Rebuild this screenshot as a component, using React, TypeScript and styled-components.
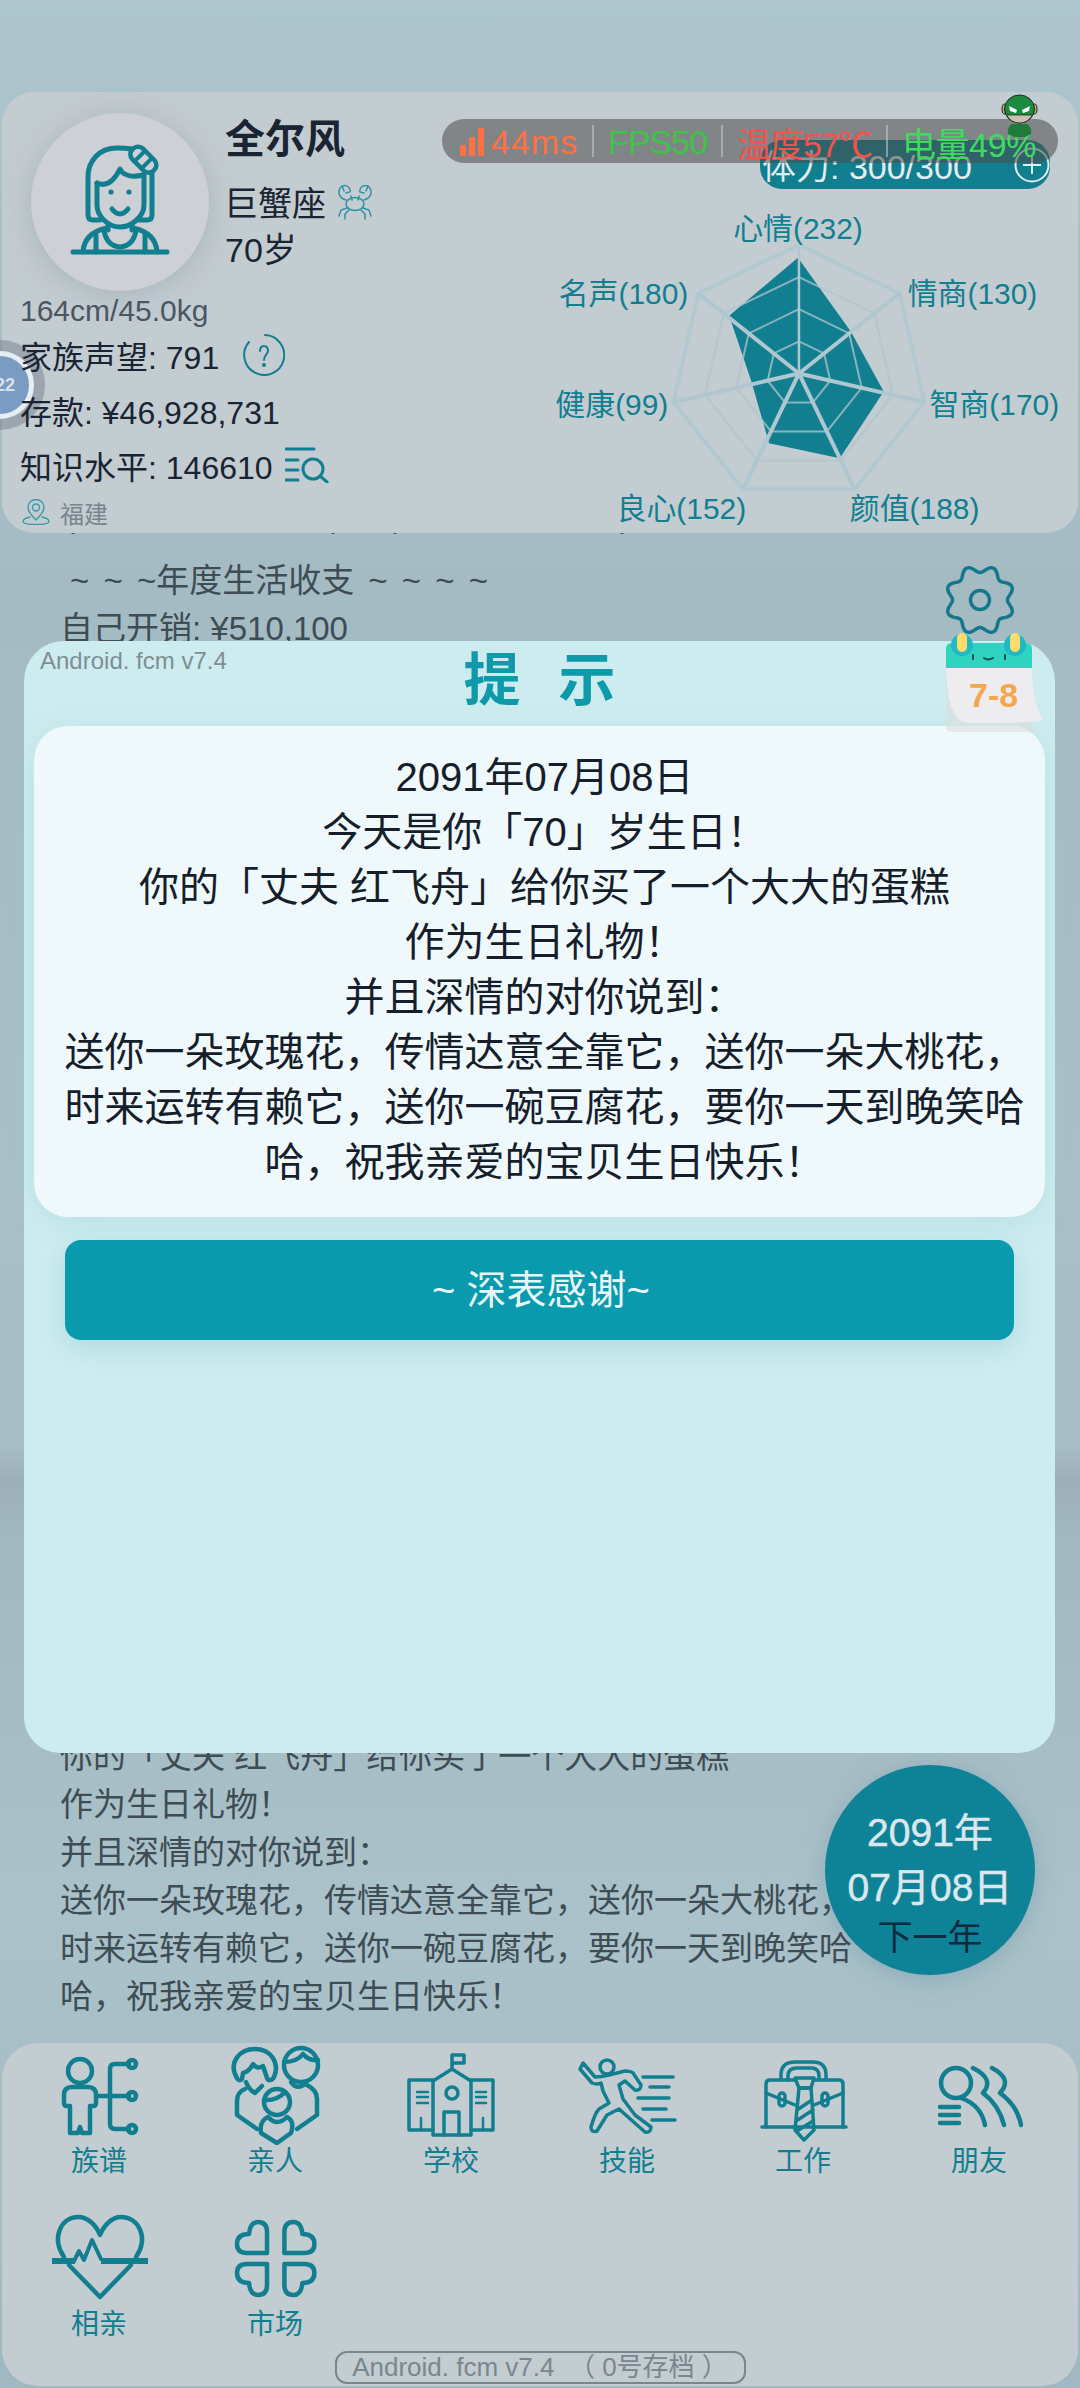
import * as React from 'react'
import styled, { createGlobalStyle } from 'styled-components'

const TEAL = '#117f90'
const FONT = `"Liberation Sans", "Noto Sans CJK SC", sans-serif`

const Global = createGlobalStyle`
  html, body {
    margin: 0;
    padding: 0;
    background: #a6bec7;
  }
  * {
    box-sizing: border-box;
  }
`

const Page = styled.div`
  position: relative;
  width: 1080px;
  height: 2388px;
  overflow: hidden;
  padding: 92px 2px 2px;
  display: flex;
  flex-direction: column;
  font-family: ${FONT};
  color: #1a2433;
  background: linear-gradient(180deg, #adc5cc 0%, #a4bbc3 25%, #a9c0c8 50%, #a8bdc4 60.500%, #9eb0b7 62%, #a2b8c0 64.500%, #abc2ca 80%, #a0b8c2 100%);
`

const TopCard = styled.section`
  position: relative;
  z-index: 2;
  flex: none;
  height: 441px;
  background: #c3ccd1;
  border-radius: 32px;
  display: flex;
  justify-content: space-between;
  padding: 21px 0 0 18px;
`

const Profile = styled.div`
  position: relative;
  z-index: 1;
  display: flex;
  flex-direction: column;
  width: 440px;
`

const ProfileHead = styled.div`
  display: flex;
  gap: 16px;
  margin-left: 11px;
`

const Avatar = styled.div`
  width: 178px;
  height: 178px;
  border-radius: 50%;
  background: #cdd0d4;
  box-shadow: 0 4px 30px rgba(120, 135, 150, 0.35);
  flex: none;
`

const HeadText = styled.div`
  display: flex;
  flex-direction: column;
  padding-top: 1px;
`

const Name = styled.div`
  font-size: 40px;
  line-height: 50px;
  font-weight: 700;
`

const Sign = styled.div`
  display: flex;
  align-items: center;
  gap: 10px;
  font-size: 34px;
  line-height: 46px;
  margin-top: 17px;
  margin-left: -1px;
  svg {
    margin-top: -4px;
  }
`

const Age = styled.div`
  font-size: 34px;
  line-height: 46px;
`

const Body = styled.div`
  display: flex;
  align-items: center;
  font-size: 30px;
  line-height: 36px;
  color: #4b5563;
  margin: 2px 0 -2px;
`

const Stat = styled.div`
  display: flex;
  align-items: center;
  font-size: 32px;
  height: 55px;
  white-space: nowrap;
`

const Place = styled.div`
  display: flex;
  align-items: center;
  gap: 10px;
  height: 30px;
  margin-top: 5px;
  margin-left: 2px;
  font-size: 24px;
  color: #7a848d;
`

const ChartSide = styled.div`
  display: flex;
  flex-direction: column;
  align-items: flex-end;
  padding: 27px 28px 0 0;
`

const Stamina = styled.div`
  width: 290px;
  height: 49px;
  border-radius: 22px;
  background: ${TEAL};
  color: #e3edf0;
  font-size: 34px;
  display: flex;
  align-items: center;
  justify-content: space-between;
  padding: 0 0 0 2px;
  margin-bottom: 10px;
`

const RadarBox = styled.svg`
  display: block;
  margin-right: -28px;
`

const RadarLabel = styled.text`
  font-family: ${FONT};
  font-size: 30px;
  fill: ${TEAL};
`

const Log = styled.div`
  position: relative;
  z-index: 1;
  flex: none;
  margin-top: -41px;
  padding-left: 58px;
  width: 880px;
  font-size: 33px;
  line-height: 48px;
  color: #3e4c54;
  white-space: nowrap;
`

const LogLine = styled.div`
  height: 48px;
`

const ParenLine = styled(LogLine)`
  display: flex;
  margin-bottom: 17px;
  padding-left: 4px;
`

const Paren = styled.span<{ $gap: number }>`
  margin-left: ${(p) => p.$gap}px;
`

const LogIndent = styled(LogLine)`
  padding-left: 10px;
  word-spacing: 5px;
`

const LogGap = styled.div`
  height: 1080px;
`

const Nav = styled.nav`
  position: relative;
  z-index: 2;
  margin-top: auto;
  flex: none;
  height: 343px;
  background: #c3ccd1;
  border-radius: 36px;
  display: flex;
  flex-direction: column;
  padding: 2px 9px 2px;
`

const NavGrid = styled.div`
  display: grid;
  height: 300px;
  grid-template-columns: repeat(6, 176px);
  grid-auto-rows: 163px;
`

const NavItem = styled.div`
  display: flex;
  flex-direction: column;
  align-items: center;
  color: ${TEAL};
  font-size: 28px;
  line-height: 36px;
  svg {
    display: block;
    margin-bottom: -1px;
  }
`

const Version = styled.div`
  margin: auto auto 0;
  width: 411px;
  height: 33px;
  border: 2px solid #7a868e;
  border-radius: 12px;
  color: #7a868e;
  font-size: 26px;
  line-height: 29px;
  text-align: center;
  white-space: pre;
`

const StatusPill = styled.div`
  position: absolute;
  z-index: 6;
  left: 442px;
  top: 119px;
  width: 616px;
  height: 44px;
  border-radius: 22px;
  background: rgba(75, 75, 75, 0.55);
  display: flex;
  align-items: center;
  padding: 2px 0 0 18px;
  font-size: 34px;
  white-space: nowrap;
`

const StatusItem = styled.span<{ $color: string; $track?: number }>`
  color: ${(p) => p.$color};
  letter-spacing: ${(p) => p.$track ?? 0}px;
  display: flex;
  align-items: center;
  gap: 6px;
`

const StatusSep = styled.i`
  width: 2px;
  height: 32px;
  margin: -2px 14px 0;
  background: rgba(200, 205, 208, 0.55);
`

const Hero = styled.svg`
  position: absolute;
  z-index: 7;
  left: 1000px;
  top: 94px;
`

const Floater = styled.div`
  position: absolute;
  left: -47px;
  top: 248px;
  width: 90px;
  height: 90px;
  border-radius: 50%;
  background: rgba(110, 120, 130, 0.45);
  display: flex;
  align-items: center;
  justify-content: flex-end;
  padding-right: 11px;
`

const FloaterCore = styled.div`
  width: 68px;
  height: 68px;
  border-radius: 50%;
  background: #7b9cc2;
  border: 5px solid #e6eef3;
  color: #d9e2ea;
  font-size: 18px;
  font-weight: 700;
  text-align: right;
  line-height: 58px;
  padding-right: 14px;
  overflow: hidden;
`

const Gear = styled.svg`
  position: absolute;
  z-index: 3;
  left: 942px;
  top: 562px;
`

const Modal = styled.section`
  position: absolute;
  z-index: 4;
  left: 24px;
  top: 641px;
  width: 1031px;
  height: 1112px;
  background: #cdecef;
  border-radius: 40px 40px 36px 36px;
  padding: 0 10px;
  display: flex;
  flex-direction: column;
`

const ModalVersion = styled.div`
  position: absolute;
  left: 16px;
  top: 6px;
  font-size: 24px;
  color: #7f8e93;
`

const ModalTitle = styled.h2`
  margin: 0;
  height: 85px;
  padding-top: 1px;
  font-size: 57px;
  font-weight: 700;
  line-height: 76px;
  letter-spacing: 38px;
  text-indent: 38px;
  text-align: center;
  color: #0f9aaa;
`

const Message = styled.div`
  height: 491px;
  background: #eff8fa;
  border-radius: 34px;
  padding: 24px 16px 0 26px;
  font-size: 40px;
  line-height: 55px;
  color: #161e2b;
  text-align: center;
  box-shadow: 0 6px 24px rgba(170, 215, 222, 0.5);
`

const Confirm = styled.div`
  margin: 23px 31px 0;
  height: 100px;
  padding-left: 3px;
  background: #0a9aae;
  border-radius: 16px;
  color: #e8f6f8;
  font-size: 40px;
  line-height: 100px;
  text-align: center;
  box-shadow: 0 8px 24px rgba(120, 190, 200, 0.35);
`

const Calendar = styled.svg`
  position: absolute;
  z-index: 5;
  left: 944px;
  top: 632px;
`

const CalendarDate = styled.text`
  font-family: ${FONT};
  font-size: 34px;
  font-weight: 700;
  fill: #f6a650;
`

const NextYear = styled.div`
  position: absolute;
  z-index: 0;
  left: 825px;
  top: 1765px;
  width: 210px;
  height: 210px;
  border-radius: 50%;
  background: #0e8296;
  box-shadow: 0 4px 24px rgba(110, 150, 165, 0.5);
  display: flex;
  flex-direction: column;
  align-items: center;
  padding-top: 43px;
  color: #dbe7ec;
  font-size: 39px;
  line-height: 50px;
  -webkit-text-stroke: 0.5px #dbe7ec;
`

const NextDate = styled.div`
  margin-top: 5px;
`

const NextLabel = styled.div`
  color: #0c2a40;
  font-size: 35px;
  -webkit-text-stroke: 0;
`

const Icon = ({ children, size = 100 }: { children: React.ReactNode; size?: number }) => (
  <svg width={size} height={size} viewBox="0 0 100 100" fill="none" stroke={TEAL} strokeWidth="4.5" strokeLinecap="round" strokeLinejoin="round">
    {children}
  </svg>
)

const TreeIcon = () => (
  <Icon>
    <circle cx="31" cy="26" r="12" />
    <path d="M23 42H39Q47 42 47 50V58Q47 61 44 61H41V88H33L31 82L29 88H21V61H18Q15 61 15 58V50Q15 42 23 42Z" />
    <path d="M47 51H80M80 19H66Q61 19 61 24V79Q61 84 66 84H80" />
    <circle cx="83" cy="19" r="4" />
    <circle cx="83" cy="51" r="4" />
    <circle cx="83" cy="84" r="4" />
  </Icon>
)

const FamilyIcon = () => (
  <Icon>
    <path d="M12 33C3 18 14 4 30 4C46 4 55 18 49 32C47 36 43 36 42 33L38 21Q32 25 28 19Q24 27 18 28L17 34Q14 37 12 33Z" />
    <path d="M21 37Q24 45 30 48L37 41" />
    <circle cx="76" cy="20" r="17" />
    <path d="M59 17Q72 17 78 9Q84 16 93 15" />
    <path d="M66 37Q72 46 81 38" />
    <path d="M20 44Q12 47 12 56V70L32 84" />
    <path d="M82 40Q92 45 92 54V70L72 84" />
    <circle cx="52" cy="57" r="13" />
    <path d="M39 55Q52 56 60 47" />
    <path d="M43 72Q34 76 36 88L52 98L66 88Q70 76 62 72Q52 82 43 72Z" />
  </Icon>
)

const SchoolIcon = () => (
  <Icon>
    <g strokeWidth="3.5">
      <path d="M32 35H8V85H32M70 35H92V85H70" />
      <path d="M32 90V36L51 24L70 36V90ZM51 24V10H63V18H51" />
      <circle cx="51" cy="48" r="6" />
      <path d="M43 90V67H58V90" />
      <path d="M16 47H27M16 52H27M16 58H27M75 47H85M75 52H85M75 58H85M20 73V85M82 73V85" strokeWidth="2.5" />
    </g>
  </Icon>
)

const SkillIcon = () => (
  <Icon>
    <g strokeWidth="3.5">
      <circle cx="30" cy="22" r="7" />
      <path d="M6 18L3 24L15 38Q20 40 24 38L26 46L32 58L22 64Q18 68 14 82Q14 88 20 86L30 70L42 64L60 80L68 87Q74 88 74 82L58 70L46 54L42 40L48 36L58 45Q64 46 64 40L56 28Q54 26 48 26L32 30Q24 32 18 32Z" />
      <path d="M66 32H96M73 42H92M61 53H92M66 64H89M75 75H98" />
    </g>
  </Icon>
)

const WorkIcon = () => (
  <Icon>
    <g strokeWidth="3.5">
      <path d="M9 82H93" />
      <path d="M42 35H17Q13 35 13 39V82M61 35H86Q90 35 90 39V82" />
      <path d="M13 48L42 60M90 48L61 60" />
      <path d="M28 35V30Q28 17 42 17H60Q73 17 73 30V35M35 35V31Q35 23 44 23H58Q66 23 66 31V35" />
      <path d="M42 33H61L58 43H46Z" />
      <path d="M46 43L42 85L51 95L61 85L58 43ZM44 65L59 55M43 76L60 65M44 86L60 76" />
      <rect x="26" y="48" width="6" height="13" rx="3" />
      <rect x="69" y="48" width="6" height="13" rx="3" />
    </g>
  </Icon>
)

const FriendIcon = () => (
  <Icon>
    <circle cx="27" cy="38" r="15" />
    <path d="M32 53Q52 60 56 80M44 23Q66 34 54 48Q70 60 75 80M63 23Q84 34 71 48Q88 60 92 80" />
    <path d="M11 62H30M11 70H30M11 78H30" />
  </Icon>
)

const LoveIcon = () => (
  <Icon>
    <path d="M15 49C2 30 12 9 29 9C39 9 47 17 51 27C55 17 63 9 72 9C90 9 100 30 87 49" />
    <path d="M20 57L51 89L82 57" />
    <path d="M25 53L30 43L35 52L43 32L52 51" strokeWidth="4" />
    <path d="M3 53H26M52 53H99" strokeWidth="6" strokeLinecap="butt" />
  </Icon>
)

const PETAL = 'M42 45V24Q42 14 33 14Q25 14 24 26Q12 26 12 36Q12 45 22 45Z'

const MarketIcon = () => (
  <Icon>
    <path d={PETAL} />
    <path d={PETAL} transform="matrix(-1 0 0 1 101.4 0)" />
    <path d={PETAL} transform="matrix(1 0 0 -1 0 101)" />
    <path d={PETAL} transform="matrix(-1 0 0 -1 101.4 101)" />
  </Icon>
)

const GirlAvatar = () => (
  <svg width="178" height="178" viewBox="0 0 178 178" fill="none" stroke={TEAL} strokeWidth="5" strokeLinecap="round" strokeLinejoin="round">
    <path d="M101 36Q95 35 86 35C68 35 57 48 57 64V102Q57 107 62 107H69M121 60V102Q121 107 116 107H108" />
    <path d="M66 70Q79 76 89 56Q94 66 112 62" />
    <path d="M66 70V92C66 104 78 114 89 114C100 114 113 104 113 92V62" />
    <circle cx="80" cy="79" r="2.6" fill={TEAL} stroke="none" />
    <circle cx="98" cy="79" r="2.6" fill={TEAL} stroke="none" />
    <path d="M81 96Q89 106 97 96" />
    <g transform="rotate(45 112 47)">
      <rect x="97" y="39" width="30" height="15" rx="7" strokeWidth="4.5" />
      <path d="M107 40V53M117 40V53" strokeWidth="4" />
    </g>
    <path d="M42 139H136" />
    <path d="M52 139Q53 120 76 115M126 139Q125 120 102 115" />
    <path d="M73 118Q76 133 89 134Q102 133 105 118" />
    <path d="M65 122V139M114 122V139" />
    <path d="M77 112V117M101 112V117" />
  </svg>
)

const CrabIcon = () => (
  <svg width="38" height="36" viewBox="0 0 38 36" fill="none" stroke="#2f93a4" strokeWidth="1.5" strokeLinecap="round">
    <ellipse cx="19" cy="20" rx="9" ry="6.5" />
    <path d="M10 16C2 14 1 6 6 2C11 0 15 4 14 8L10 9M6 2L8 7" />
    <path d="M28 16C36 14 37 6 32 2C27 0 23 4 24 8L28 9M32 2L30 7" />
    <path d="M11 24L5 26L3 32M13 26L9 30L9 35M25 26L29 30L29 35M27 24L33 26L35 32M16 16L15 12M22 16L23 12" />
  </svg>
)

const HelpIcon = () => (
  <svg width="42" height="42" viewBox="0 0 42 42" fill="none" stroke={TEAL} strokeWidth="2" strokeLinecap="round" style={{ marginLeft: 24 }}>
    <path d="M22 1A20 20 0 1 1 6 8" />
    <path d="M17 17C17 14 18.500 12 21 12C23.500 12 25 14 25 17C25 20 21 21 21 26" />
    <circle cx="21" cy="31" r="1" fill={TEAL} />
  </svg>
)

const SearchListIcon = () => (
  <svg width="44" height="36" viewBox="0 0 44 36" fill="none" stroke={TEAL} strokeWidth="3" strokeLinecap="round" style={{ marginLeft: 12 }}>
    <path d="M1 2H29M1 13H13M1 23H13M1 33H13" />
    <circle cx="28" cy="22" r="10" />
    <path d="M35 29L42 35" />
  </svg>
)

const PinIcon = () => (
  <svg width="28" height="26" viewBox="0 0 28 26" fill="none" stroke="#3a9aa8" strokeWidth="1.4" strokeLinecap="round">
    <path d="M14 21C8 15 6 12 6 8.500A8 8 0 0 1 22 8.500C22 12 20 15 14 21Z" />
    <circle cx="14" cy="8.500" r="3.500" />
    <path d="M8 18C3 19 1 21 1 22.500C1 24.500 6 25.500 14 25.500C22 25.500 27 24.500 27 22.500C27 21 25 19 20 18" />
  </svg>
)

const PlusIcon = () => (
  <svg width="36" height="36" viewBox="0 0 36 36" fill="none" stroke="#e3edf0" strokeWidth="2">
    <circle cx="18" cy="18" r="16.500" />
    <path d="M18 9V27M9 18H27" />
  </svg>
)

const SignalIcon = () => (
  <svg width="25" height="32" viewBox="0 0 25 32" fill="#ff7043">
    <rect x="0" y="19" width="6" height="11" rx="1" />
    <rect x="9" y="11" width="6" height="19" rx="1" />
    <rect x="18" y="2" width="6" height="28" rx="1" />
  </svg>
)

const polar = (cx: number, cy: number, r: number, i: number, n = 7) => {
  const a = (i / n) * Math.PI * 2 - Math.PI / 2
  return [cx + r * Math.cos(a), cy + r * Math.sin(a)]
}

const toPoints = (list: number[][]) => list.map((p) => p.map((v) => v.toFixed(1)).join(',')).join(' ')

// svg sits at x 490, y 200 in the page
const RC = [309, 175]
const RADIUS = 129

const RADAR_LABELS = [
  { text: '心情(232)', x: 308, y: 40, anchor: 'middle' },
  { text: '情商(130)', x: 418, y: 105, anchor: 'start' },
  { text: '智商(170)', x: 440, y: 217, anchor: 'start' },
  { text: '颜值(188)', x: 360, y: 321, anchor: 'start' },
  { text: '良心(152)', x: 256, y: 321, anchor: 'end' },
  { text: '健康(99)', x: 178, y: 217, anchor: 'end' },
  { text: '名声(180)', x: 198, y: 105, anchor: 'end' },
]

const RADAR_DATA = [
  [798, 259],
  [851, 333],
  [884, 393],
  [840, 460],
  [769, 445],
  [751, 382],
  [729, 317],
].map(([x, y]) => [x - 490, y - 200])

const Radar = () => (
  <RadarBox width="588" height="335" viewBox="0 0 588 335">
    <polygon points={toPoints(RADAR_DATA)} fill={TEAL} />
    {[0.25, 0.5, 0.75, 1].map((k) => (
      <polygon
        key={k}
        points={toPoints([0, 1, 2, 3, 4, 5, 6].map((i) => polar(RC[0], RC[1], RADIUS * k, i)))}
        fill="none"
        stroke={k === 1 ? '#b3c9d1' : '#afc6ce'}
        strokeWidth={k === 1 ? 4 : 2}
        opacity={k === 1 ? 1 : 0.75}
      />
    ))}
    {[0, 1, 2, 3, 4, 5, 6].map((i) => {
      const [x, y] = polar(RC[0], RC[1], RADIUS, i)
      return <line key={i} x1={RC[0]} y1={RC[1]} x2={x} y2={y} stroke="#afc8d0" strokeWidth={i === 0 ? 2.5 : 4} />
    })}
    {RADAR_LABELS.map((l) => (
      <RadarLabel key={l.text} x={l.x} y={l.y} textAnchor={l.anchor}>
        {l.text}
      </RadarLabel>
    ))}
  </RadarBox>
)

const GEAR_PATH = (() => {
  const pts: string[] = []
  for (let i = 0; i < 240; i++) {
    const t = (i / 240) * Math.PI * 2
    const r = 31 - 3.5 * Math.cos(8 * t)
    pts.push(`${(38 + r * Math.sin(t)).toFixed(2)},${(38 - r * Math.cos(t)).toFixed(2)}`)
  }
  return `M${pts.join('L')}Z`
})()

const NAV = [
  { label: '族谱', icon: <TreeIcon /> },
  { label: '亲人', icon: <FamilyIcon /> },
  { label: '学校', icon: <SchoolIcon /> },
  { label: '技能', icon: <SkillIcon /> },
  { label: '工作', icon: <WorkIcon /> },
  { label: '朋友', icon: <FriendIcon /> },
  { label: '相亲', icon: <LoveIcon /> },
  { label: '市场', icon: <MarketIcon /> },
]

const App = () => (
  <Page>
    <Global />
    <TopCard>
      <Floater>
        <FloaterCore>22</FloaterCore>
      </Floater>
      <Profile>
        <ProfileHead>
          <Avatar>
            <GirlAvatar />
          </Avatar>
          <HeadText>
            <Name>全尔风</Name>
            <Sign>
              巨蟹座
              <CrabIcon />
            </Sign>
            <Age>70岁</Age>
          </HeadText>
        </ProfileHead>
        <Body>164cm/45.0kg</Body>
        <Stat>
          家族声望: 791
          <HelpIcon />
        </Stat>
        <Stat>存款: ¥46,928,731</Stat>
        <Stat>
          知识水平: 146610
          <SearchListIcon />
        </Stat>
        <Place>
          <PinIcon />
          福建
        </Place>
      </Profile>
      <ChartSide>
        <Stamina>
          体力: 300/300
          <PlusIcon />
        </Stamina>
        <Radar />
      </ChartSide>
    </TopCard>
    <Log>
      <ParenLine>
        <Paren $gap={0}>(</Paren>
        <Paren $gap={249}>(</Paren>
        <Paren $gap={58}>)</Paren>
        <Paren $gap={216}>)</Paren>
      </ParenLine>
      <LogIndent>~ ~ ~年度生活收支 ~ ~ ~ ~</LogIndent>
      <LogLine>自己开销: ¥510,100</LogLine>
      <LogGap />
      <LogLine>你的「丈夫 红飞舟」给你买了一个大大的蛋糕</LogLine>
      <LogLine>作为生日礼物！</LogLine>
      <LogLine>并且深情的对你说到：</LogLine>
      <LogLine>送你一朵玫瑰花，传情达意全靠它，送你一朵大桃花，</LogLine>
      <LogLine>时来运转有赖它，送你一碗豆腐花，要你一天到晚笑哈</LogLine>
      <LogLine>哈，祝我亲爱的宝贝生日快乐！</LogLine>
    </Log>
    <Nav>
      <NavGrid>
        {NAV.map((n) => (
          <NavItem key={n.label}>
            {n.icon}
            {n.label}
          </NavItem>
        ))}
      </NavGrid>
      <Version>{'Android. fcm v7.4  （ 0号存档 ）'}</Version>
    </Nav>

    <StatusPill>
      <StatusItem $color="#ff7043" $track={1}>
        <SignalIcon />
        44ms
      </StatusItem>
      <StatusSep />
      <StatusItem $color="#3fc24a" $track={-1}>FPS50</StatusItem>
      <StatusSep />
      <StatusItem $color="#f4524d" $track={-1}>温度57℃</StatusItem>
      <StatusSep />
      <StatusItem $color="#3ddc5c" $track={-0.4}>电量49%</StatusItem>
    </StatusPill>
    <Hero width="42" height="44" viewBox="0 0 42 44">
      <path d="M12 30H27Q32 33 31 40L25 43H14L8 40Q7 33 12 30Z" fill="#1f7a3d" />
      <ellipse cx="4.500" cy="15" rx="2.500" ry="5" fill="#b8a878" stroke="#222" strokeWidth="1" />
      <ellipse cx="34.500" cy="15" rx="2.500" ry="5" fill="#b8a878" stroke="#222" strokeWidth="1" />
      <ellipse cx="19.500" cy="15" rx="15" ry="14" fill="#1c8a3f" stroke="#1a2a1e" strokeWidth="1" />
      <path d="M6.500 21H32.500Q28 29 19.500 29Q11 29 6.500 21Z" fill="#c9c2ae" stroke="#1a2a1e" strokeWidth="0.8" />
      <path d="M9 12L17 16L16 19L10 17ZM30 12L22 16L23 19L29 17Z" fill="#fff" />
    </Hero>
    <Gear width="76" height="76" viewBox="0 0 76 76" fill="none" stroke="#14788a" strokeWidth="3.5">
      <path d={GEAR_PATH} />
      <circle cx="38" cy="38" r="9.500" />
    </Gear>
    <NextYear>
      <div>2091年</div>
      <NextDate>07月08日</NextDate>
      <NextLabel>下一年</NextLabel>
    </NextYear>

    <Modal>
      <ModalVersion>Android. fcm v7.4</ModalVersion>
      <ModalTitle>提示</ModalTitle>
      <Message>
        2091年07月08日
        <br />
        今天是你「70」岁生日！
        <br />
        你的「丈夫 红飞舟」给你买了一个大大的蛋糕
        <br />
        作为生日礼物！
        <br />
        并且深情的对你说到：
        <br />
        送你一朵玫瑰花，传情达意全靠它，送你一朵大桃花，时来运转有赖它，送你一碗豆腐花，要你一天到晚笑哈哈，祝我亲爱的宝贝生日快乐！
      </Message>
      <Confirm>~ 深表感谢~</Confirm>
    </Modal>
    <Calendar width="102" height="102" viewBox="0 0 102 102">
      <path d="M2 36H88V100H8Q2 100 2 94Z" fill="#dcdcdc" opacity="0.55" />
      <path d="M2 36H88Q88 70 99 88Q80 92 24 91Q6 90 3 51Z" fill="#ededef" />
      <path d="M2 36V17Q2 11 8 11H82Q88 11 88 17V36Z" fill="#2fd3bf" />
      <circle cx="18" cy="13" r="11" fill="#1fb8c4" />
      <circle cx="71" cy="13" r="11" fill="#1fb8c4" />
      <rect x="13" y="1" width="10" height="19" rx="5" fill="#fbdc6a" />
      <rect x="66" y="1" width="10" height="19" rx="5" fill="#fbdc6a" />
      <path d="M29 23V27M61 23V27M40 26Q44 29 49 26" stroke="#1d4a4c" strokeWidth="2" fill="none" strokeLinecap="round" />
      <CalendarDate x="25" y="75">7-8</CalendarDate>
    </Calendar>
  </Page>
)

export default App
